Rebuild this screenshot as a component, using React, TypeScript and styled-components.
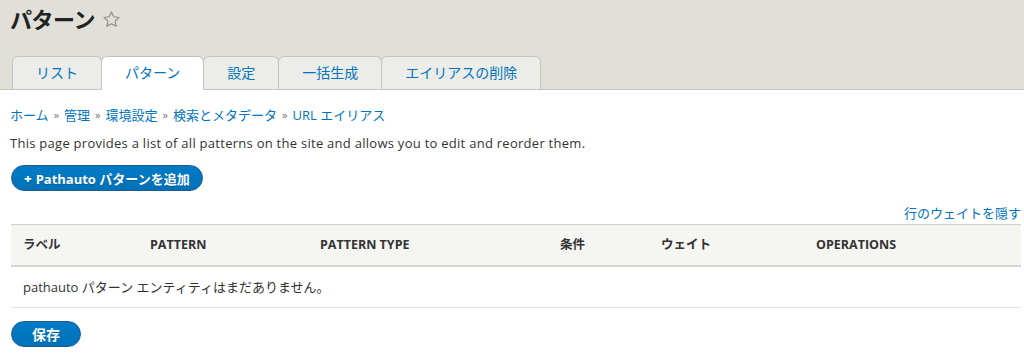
import React from "react";
import styled, { createGlobalStyle } from "styled-components";

const GlobalStyle = createGlobalStyle`
  html, body { margin: 0; padding: 0; background: #fff; }
  body {
    font-family: "Open Sans", "Noto Sans CJK JP", sans-serif;
    font-size: 13px;
    line-height: 20px;
    color: #333;
  }
  * { box-sizing: border-box; }
`;

const Header = styled.header`
  background: #e0e0d8;
  border-bottom: 1px solid #c6c6c0;
  padding: 4px 0 0 10px;
`;

const TitleRow = styled.div`
  display: flex;
  align-items: center;
  gap: 7px;
  height: 30px;
`;

const Title = styled.h1`
  margin: 0;
  font-size: 22px;
  line-height: 30px;
  font-weight: 600;
  color: #222;
  letter-spacing: -0.5px;
`;

const Tabs = styled.ul`
  display: flex;
  list-style: none;
  margin: 22px 0 -1px 2px;
  padding: 0;
`;

const Tab = styled.li<{ $active?: boolean }>`
  height: 34px;
  display: flex;
  align-items: center;
  justify-content: center;
  padding: 0 23px;
  margin-right: -1px;
  border: 1px solid #c4c4be;
  border-bottom-color: ${(p) => (p.$active ? "#fff" : "#c6c6c0")};
  border-radius: 6px 6px 0 0;
  background: ${(p) => (p.$active ? "#fff" : "#ecece8")};
  color: #0074bd;
  font-size: 14px;
  position: relative;
  z-index: ${(p) => (p.$active ? 1 : 0)};
`;

const Content = styled.main`
  padding: 15px 3px 0 11px;
`;

const Breadcrumb = styled.nav`
  display: flex;
  align-items: center;
  gap: 5px;
  margin-left: -1px;
  color: #0074bd;
`;

const Sep = styled.span`
  color: #777;
  font-size: 11px;
`;

const Crumb = styled.a`
  color: #0074bd;
  text-decoration: none;
`;

const Description = styled.p`
  margin: 8px 0 0 -1px;
  letter-spacing: 0.27px;
`;

const PillButton = styled.button<{ $pad: number; $size: number }>`
  display: inline-flex;
  align-items: center;
  height: 26px;
  padding: 0 ${(p) => p.$pad}px;
  border: 1px solid #1e5c90;
  border-radius: 20em;
  background: linear-gradient(#007bc6, #0071b8);
  color: #fff;
  font-family: "Open Sans", "Noto Sans CJK JP", sans-serif;
  font-size: ${(p) => p.$size}px;
  font-weight: 700;
  text-shadow: 0 1px rgba(0, 0, 0, 0.2);
  cursor: pointer;
`;

const Plus = styled.span`
  font-weight: 900;
  margin-right: 4px;
`;

const AddWrap = styled.div`
  margin-top: 12px;
`;

const WeightToggle = styled.div`
  display: flex;
  justify-content: flex-end;
  margin-top: 12px;
  color: #0074bd;
`;

const Table = styled.table`
  width: 100%;
  border-collapse: collapse;
  margin-top: 1px;
  table-layout: fixed;
`;

const Th = styled.th<{ $w: number }>`
  width: ${(p) => p.$w}px;
  text-align: left;
  background: #f5f5f2;
  padding: 10px 12px;
  height: 40px;
  font-size: 12.5px;
  font-weight: 700;
  color: #333;
  text-transform: uppercase;
`;

const HeadRow = styled.tr`
  border-top: 1px solid #cfcfca;
  border-bottom: 2px solid #d6d6d1;
`;

const BodyRow = styled.tr`
  border-bottom: 1px solid #e6e4df;
`;

const Td = styled.td`
  padding: 10px 12px;
  height: 39px;
  color: #333;
`;

const SaveWrap = styled.div`
  margin-top: 13px;
`;

const Star = () => (
  <svg width="19" height="19" viewBox="0 0 24 24" fill="none" stroke="#8a8a84" strokeWidth="1.4" strokeLinejoin="round">
    <path d="M12 2.5l2.9 6.1 6.6.8-4.9 4.6 1.3 6.6L12 17.3l-5.9 3.3 1.3-6.6-4.9-4.6 6.6-.8z" />
  </svg>
);

const cols: [string, number][] = [
  ["ラベル", 127],
  ["Pattern", 170],
  ["Pattern type", 240],
  ["条件", 101],
  ["ウェイト", 155],
  ["Operations", 217],
];

export default function App() {
  return (
    <>
      <GlobalStyle />
      <Header>
        <TitleRow>
          <Title>パターン</Title>
          <Star />
        </TitleRow>
        <Tabs>
          <Tab>リスト</Tab>
          <Tab $active>パターン</Tab>
          <Tab>設定</Tab>
          <Tab>一括生成</Tab>
          <Tab>エイリアスの削除</Tab>
        </Tabs>
      </Header>
      <Content>
        <Breadcrumb>
          <Crumb>ホーム</Crumb>
          <Sep>»</Sep>
          <Crumb>管理</Crumb>
          <Sep>»</Sep>
          <Crumb>環境設定</Crumb>
          <Sep>»</Sep>
          <Crumb>検索とメタデータ</Crumb>
          <Sep>»</Sep>
          <Crumb>URL エイリアス</Crumb>
        </Breadcrumb>
        <Description>
          This page provides a list of all patterns on the site and allows you to edit and reorder them.
        </Description>
        <AddWrap>
          <PillButton $pad={12} $size={13}>
            <Plus>+</Plus>Pathauto パターンを追加
          </PillButton>
        </AddWrap>
        <WeightToggle>行のウェイトを隠す</WeightToggle>
        <Table>
          <thead>
            <HeadRow>
              {cols.map(([label, w]) => (
                <Th key={label} $w={w}>
                  {label}
                </Th>
              ))}
            </HeadRow>
          </thead>
          <tbody>
            <BodyRow>
              <Td colSpan={6}>pathauto パターン エンティティはまだありません。</Td>
            </BodyRow>
          </tbody>
        </Table>
        <SaveWrap>
          <PillButton $pad={20} $size={14}>保存</PillButton>
        </SaveWrap>
      </Content>
    </>
  );
}
